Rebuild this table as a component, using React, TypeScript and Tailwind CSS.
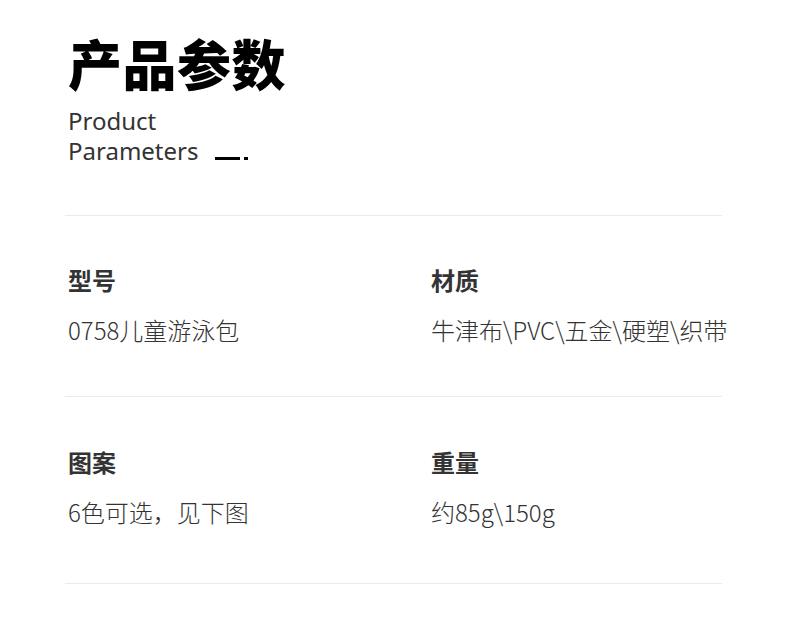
const specs = [
  [
    { label: "型号", value: "0758儿童游泳包" },
    { label: "材质", value: "牛津布\\PVC\\五金\\硬塑\\织带" },
  ],
  [
    { label: "图案", value: "6色可选，见下图" },
    { label: "重量", value: "约85g\\150g" },
  ],
];

export default function App() {
  return (
    <div className="h-[644px] w-[790px] overflow-hidden bg-white font-['Noto_Sans','Noto_Sans_CJK_SC',sans-serif]">
      <div className="pl-[65px] pr-[68px]">
        <header className="pl-[3px] pt-[33px] pb-[49px]">
          <h1 className="text-[54px] leading-[60px] font-black tracking-[0.5px] text-black font-['Noto_Sans_CJK_SC',sans-serif]">
            产品参数
          </h1>
          <p className="mt-[13px] text-[24px] leading-[30px] text-[#333]">Product</p>
          <p className="flex items-end text-[24px] leading-[30px] text-[#333]">
            Parameters
            <span aria-hidden className="mb-[6px] ml-[17px] h-[3px] w-[25px] bg-black" />
            <span aria-hidden className="mb-[6px] ml-[4px] h-[3px] w-[4px] bg-black" />
          </p>
        </header>

        {specs.map((row, i) => (
          <div
            key={i}
            className="grid grid-cols-[363px_1fr] border-t border-[#ebebeb] pt-[46px] pb-[48px] pl-[3px] last:border-b last:pt-[47px] last:pb-[53px]"
          >
            {row.map((item) => (
              <div key={item.label} className="whitespace-nowrap">
                <div className="text-[24px] leading-[36px] font-bold text-[#333] font-['Noto_Sans_CJK_SC',sans-serif]">
                  {item.label}
                </div>
                <div className="mt-[14px] text-[24px] leading-[36px] font-light text-[#333] font-['Noto_Sans_CJK_SC',sans-serif]">
                  {item.value}
                </div>
              </div>
            ))}
          </div>
        ))}
      </div>
    </div>
  );
}
